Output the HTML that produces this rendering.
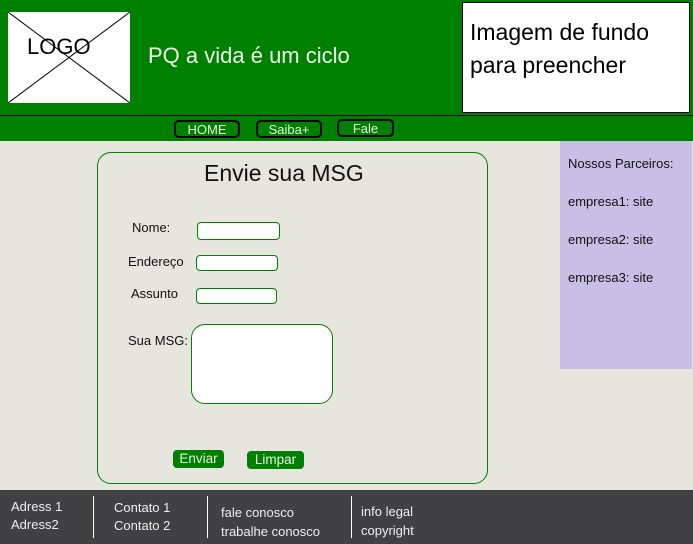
<!DOCTYPE html>
<html><head><meta charset="utf-8"><style>
*{margin:0;padding:0;box-sizing:border-box}
body{width:693px;height:544px;background:#e6e6de;position:relative;overflow:hidden;font-family:"Liberation Sans",sans-serif}
.a{position:absolute}
.hdr{left:0;top:0;width:693px;height:141px;background:#008000}
.line{left:0;top:115px;width:693px;height:1px;background:#000}
.logo{left:8px;top:12px;width:122px;height:91px;background:#fff}
.nav{border:2px solid #000;border-radius:5px;color:#e8f0e0;font-size:13px;text-align:center;line-height:15px;height:18px}
.in{background:#fff;border:1px solid #008000;border-radius:4px}
.lbl{font-size:13px;color:#111}
.btn{background:#008000;color:#e8f0e0;font-size:13.5px;border-radius:4px;text-align:center;line-height:17px;height:18px}
.ft{left:0;top:490px;width:693px;height:54px;background:#414042}
.sep{top:496px;width:1px;height:42px;background:#fff}
.side{left:560px;top:141px;width:132px;height:228px;background:#c8bfe6;font-size:13px;color:#111}
.f{color:#eee;font-size:13px;line-height:18px}
</style></head><body>
<div class="a hdr"></div>
<div class="a line"></div>
<div class="a logo"><svg width="122" height="91" style="position:absolute;left:0;top:0"><line x1="0" y1="0" x2="122" y2="91" stroke="#000"/><line x1="122" y1="0" x2="0" y2="91" stroke="#000"/></svg>
<div class="a" style="left:19px;top:22px;font-size:22px;color:#000">LOGO</div></div>
<div class="a" style="left:148px;top:43px;font-size:22px;color:#eef8e8">PQ a vida é um ciclo</div>
<div class="a" style="left:462px;top:2px;width:228px;height:111px;background:#fff;border:1px solid #000"><div style="padding:13px 0 0 7px;font-size:23px;line-height:33px;color:#000">Imagem de fundo<br>para preencher</div></div>
<div class="a nav" style="left:174px;top:120px;width:66px">HOME</div>
<div class="a nav" style="left:256px;top:120px;width:66px">Saiba+</div>
<div class="a nav" style="left:337px;top:119px;width:57px">Fale</div>
<div class="a" style="left:97px;top:152px;width:391px;height:332px;border:1px solid #008000;border-radius:14px"></div>
<div class="a" style="left:204px;top:160px;font-size:23px;color:#111">Envie sua MSG</div>
<div class="a lbl" style="left:132px;top:220px">Nome:</div>
<div class="a lbl" style="left:128px;top:254px">Endereço</div>
<div class="a lbl" style="left:131px;top:286px">Assunto</div>
<div class="a lbl" style="left:128px;top:333px">Sua MSG:</div>
<div class="a in" style="left:197px;top:222px;width:83px;height:18px"></div>
<div class="a in" style="left:196px;top:255px;width:82px;height:16px"></div>
<div class="a in" style="left:196px;top:288px;width:81px;height:16px"></div>
<div class="a in" style="left:191px;top:324px;width:142px;height:80px;border-radius:14px"></div>
<div class="a btn" style="left:173px;top:450px;width:51px">Enviar</div>
<div class="a btn" style="left:247px;top:451px;width:57px">Limpar</div>
<div class="a side"><div style="position:absolute;left:8px;top:15px">Nossos Parceiros:</div><div style="position:absolute;left:8px;top:53px">empresa1: site</div><div style="position:absolute;left:8px;top:91px">empresa2: site</div><div style="position:absolute;left:8px;top:129px">empresa3: site</div></div>
<div class="a ft"></div>
<div class="a sep" style="left:93px"></div>
<div class="a sep" style="left:207px"></div>
<div class="a sep" style="left:351px"></div>
<div class="a f" style="left:11px;top:498px">Adress 1<br>Adress2</div>
<div class="a f" style="left:114px;top:499px">Contato 1<br>Contato 2</div>
<div class="a f" style="left:221px;top:503px;line-height:19px">fale conosco<br>trabalhe conosco</div>
<div class="a f" style="left:361px;top:502px;line-height:19px">info legal<br>copyright</div>
</body></html>
